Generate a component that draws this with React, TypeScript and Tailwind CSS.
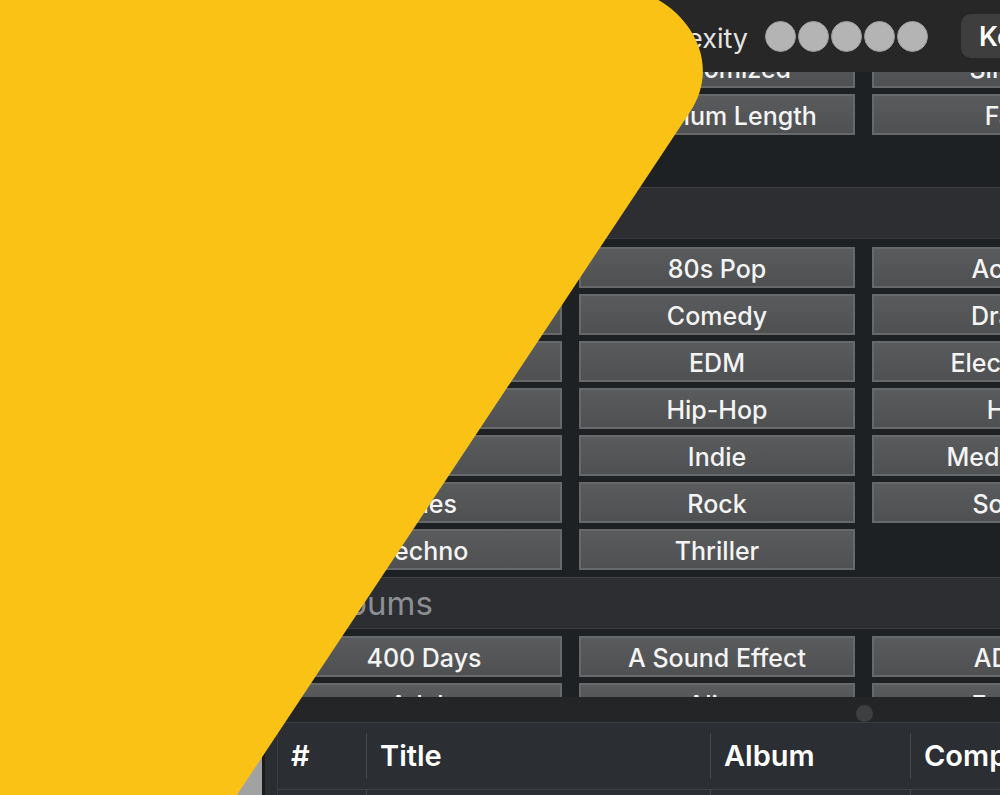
import React from "react";

const btn =
  "h-[41px] flex items-center justify-center pt-[5px] border-2 border-[#67686a] bg-linear-to-b from-[#5a5b5d] to-[#4f5052] text-[#f4f4f4] text-[25px] font-medium whitespace-nowrap overflow-hidden";

type Cell = string | null;

function ButtonGrid({ rows }: { rows: Cell[][] }) {
  return (
    <div className="grid grid-cols-[276px_276px_276px] gap-x-[17px] gap-y-[6px] pl-[21px]">
      {rows.flatMap((row, ri) =>
        row.map((c, ci) =>
          c === null ? (
            <div key={`${ri}-${ci}`} className="h-[41px]" />
          ) : (
            <div key={`${ri}-${ci}`} className={btn}>
              {c}
            </div>
          )
        )
      )}
    </div>
  );
}

function SectionHeader({ label }: { label: string }) {
  return (
    <div className="h-[52px] shrink-0 border-t border-b border-t-[#404245] border-b-[#393b3e] bg-[#2d2e32] flex items-center pl-[51px]">
      <span className="text-[33px] leading-none text-[#8d8e92]">{label}</span>
    </div>
  );
}

export default function App() {
  const top: Cell[][] = [
    ["Standard", "Randomized", "Simple"],
    ["Maximum Length", "Minimum Length", "Fast"],
  ];
  const genres: Cell[][] = [
    ["Acoustic", "80s Pop", "Action"],
    ["Ambient", "Comedy", "Drama"],
    ["Chill", "EDM", "Electronic"],
    ["Classical", "Hip-Hop", "Hits"],
    ["Jazz", "Indie", "Meditation"],
    ["Blues", "Rock", "Songs"],
    ["Techno", "Thriller", null],
  ];
  const albums: Cell[][] = [
    ["400 Days", "A Sound Effect", "ADHD"],
    ["Adele", "Alive", "Ember"],
  ];

  return (
    <div
      className="relative w-[1000px] h-[795px] overflow-hidden bg-[#1e2124]"
      style={{ fontFamily: "Inter, 'Liberation Sans', sans-serif" }}
    >
      {/* toolbar */}
      <div className="h-[72px] bg-[#272727] flex items-center">
        <div className="w-[748px] shrink-0 flex justify-end pt-[4px]">
          <span className="text-[27px] text-[#e4e4e4] leading-none">Complexity</span>
        </div>
        <div className="ml-[17px] flex gap-[2px] shrink-0">
          {[0, 1, 2, 3, 4].map((i) => (
            <div key={i} className="w-[31px] h-[31px] rounded-full bg-[#b4b4b4] border border-[#9c9c9c]" />
          ))}
        </div>
        <div className="ml-[33px] h-[44px] shrink-0 rounded-[10px] bg-[#3e3e3e] pl-[18px] pr-[18px] pt-[3px] flex items-center text-[27px] font-semibold text-white whitespace-nowrap">
          Key
        </div>
      </div>

      <div className="flex h-[723px]">
        <div className="w-[262px] shrink-0 bg-[#a2a2a2]" />
        <div className="w-[3px] shrink-0 bg-[#1b1b1b]" />
        <div className="flex flex-col w-[900px] shrink-0">
          {/* scroll area */}
          <div className="h-[625px] shrink-0 overflow-hidden bg-[#1e2124]">
            <div className="-mt-[25px]">
              <ButtonGrid rows={top} />
              <div className="h-[52px]" />
              <SectionHeader label="Genres" />
              <div className="h-[8px]" />
              <ButtonGrid rows={genres} />
              <div className="h-[7px]" />
              <SectionHeader label="Albums" />
              <div className="h-[7px]" />
              <ButtonGrid rows={albums} />
            </div>
          </div>

          {/* splitter */}
          <div className="h-[25px] shrink-0 bg-[#242526] flex items-center pl-[591px] pt-[8px]">
            <div className="w-[17px] h-[17px] rounded-full bg-[#3e3f41]" />
          </div>

          {/* table */}
          <div className="h-[73px] shrink-0 bg-[#2a2d31] border-t border-[#3b3e42] overflow-hidden">
            <div className="ml-[12px] h-full border-l border-[#3a3d41] bg-[#2b2e33]">
              <div className="h-[67px] border-b border-[#3d4044] flex text-[29px] font-semibold text-white">
                <div className="w-[88px] shrink-0 flex items-center pl-[13px]">#</div>
                <div className="w-px my-[10px] bg-[#44474b]" />
                <div className="w-[343px] shrink-0 flex items-center pl-[13px]">Title</div>
                <div className="w-px my-[10px] bg-[#44474b]" />
                <div className="w-[199px] shrink-0 flex items-center pl-[13px]">Album</div>
                <div className="w-px my-[10px] bg-[#44474b]" />
                <div className="w-[250px] shrink-0 flex items-center pl-[13px] whitespace-nowrap">Composer</div>
              </div>
              <div className="flex h-[10px]">
                <div className="w-[88px] shrink-0" />
                <div className="w-px bg-[#44474b]" />
                <div className="w-[343px] shrink-0" />
                <div className="w-px bg-[#44474b]" />
                <div className="w-[199px] shrink-0" />
                <div className="w-px bg-[#44474b]" />
              </div>
            </div>
          </div>
        </div>
      </div>

      {/* yellow overlay shape */}
      <svg
        className="absolute inset-0 pointer-events-none"
        width="1000"
        height="795"
        viewBox="0 0 1000 795"
      >
        <path
          d="M-10,-10 L635,-10 C688,5 723,62 690,112 L227,810 L-10,810 Z"
          fill="#F9C214"
        />
      </svg>
    </div>
  );
}
